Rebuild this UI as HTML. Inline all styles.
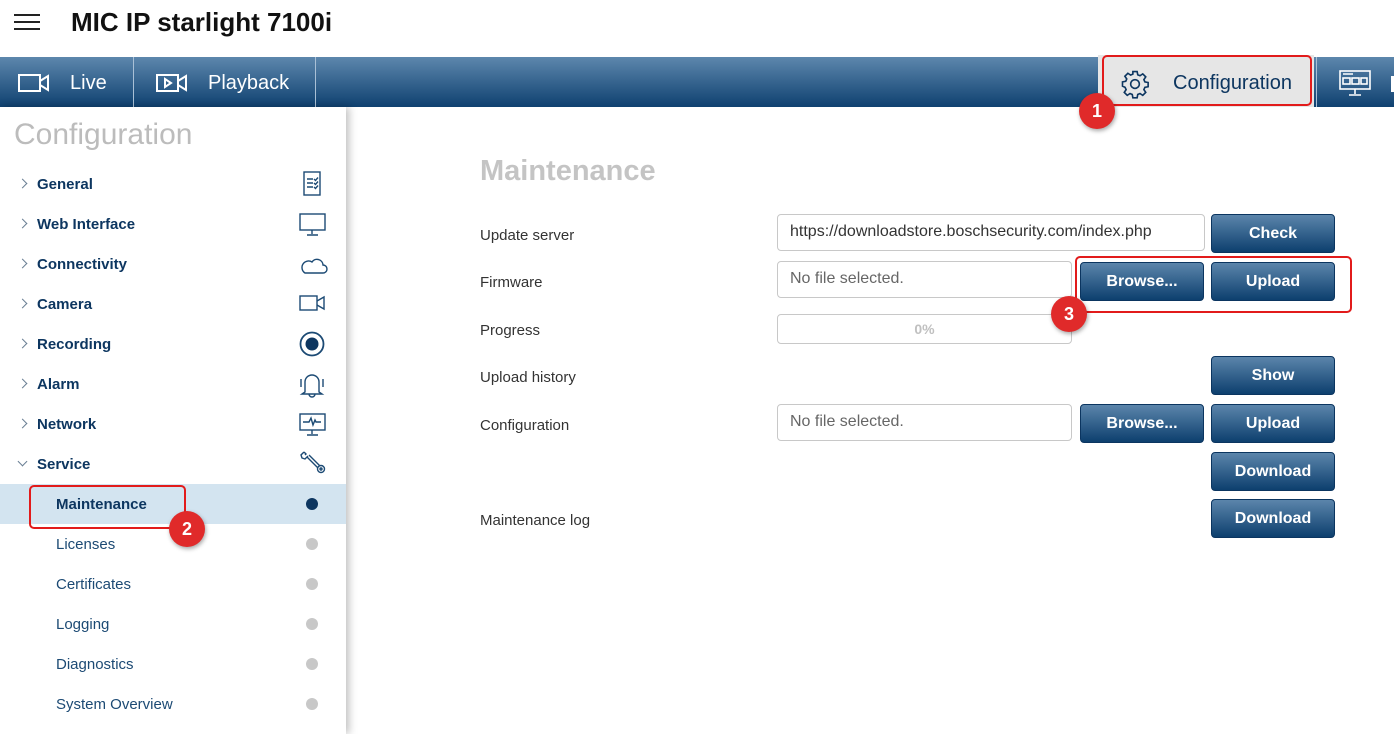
<!DOCTYPE html>
<html><head><meta charset="utf-8"><style>
*{box-sizing:border-box;margin:0;padding:0}
body{width:1394px;height:734px;overflow:hidden;background:#fff;font-family:"Liberation Sans",Arial,sans-serif;position:relative}
.a{position:absolute}
.nav{left:0;top:57px;width:1394px;height:50px;background:linear-gradient(#5d87ad,#0f4170)}
.nt{color:#fff;font-size:20px;top:72px}
.vd{top:57px;width:1px;height:50px;background:#a9c0d6}
.side{left:0;top:107px;width:346px;height:627px;background:#fff;box-shadow:3px 0 8px rgba(0,0,0,.25)}
.mi{left:37px;font-size:15px;font-weight:bold;color:#0d3660}
.ch{left:19px;width:7px;height:7px;border-right:1px solid #6a7f94;border-bottom:1px solid #6a7f94;transform:rotate(-45deg)}
.si{left:56px;font-size:15px;color:#1c4a74}
.dot{left:306px;width:12px;height:12px;border-radius:50%;background:#c8c8c8}
.lb{left:480px;font-size:15px;color:#333}
.in{border:1px solid #c8c8c8;border-radius:4px;font-size:16px;color:#333;padding:8px 12px;background:#fff}
.bt{width:124px;height:39px;border-radius:4px;background:linear-gradient(#5b85ab,#0d3f6e);color:#fff;font-weight:bold;font-size:16px;text-align:center;line-height:38px;border:1px solid #0b3560}
.rb{border:2px solid #e21b1b;border-radius:5px}
.bd{width:36px;height:36px;border-radius:50%;background:#e02a2a;color:#fff;font-weight:bold;font-size:18px;text-align:center;line-height:36px;box-shadow:1px 2px 4px rgba(0,0,0,.35)}
</style></head><body>
<div class="a" style="left:14px;top:14px;width:26px;height:2px;background:#222"></div>
<div class="a" style="left:14px;top:21px;width:26px;height:2px;background:#222"></div>
<div class="a" style="left:14px;top:28px;width:26px;height:2px;background:#222"></div>
<div class="a" style="left:71px;top:7px;font-size:26px;font-weight:bold;color:#111">MIC IP starlight 7100i</div>

<div class="a nav"></div>
<svg class="a" style="left:18px;top:73px" width="32" height="20" viewBox="0 0 32 20" fill="none" stroke="#fff" stroke-width="2"><rect x="1" y="2" width="21" height="16"/><path d="M22 8l8-5v14l-8-5"/></svg>
<div class="a nt" style="left:70px">Live</div>
<div class="a vd" style="left:133px"></div>
<svg class="a" style="left:156px;top:73px" width="32" height="20" viewBox="0 0 32 20" fill="none" stroke="#fff" stroke-width="2"><rect x="1" y="2" width="21" height="16"/><path d="M22 8l8-5v14l-8-5"/><path d="M9 6l6 4-6 4z"/></svg>
<div class="a nt" style="left:208px">Playback</div>
<div class="a vd" style="left:315px"></div>
<div class="a" style="left:1098px;top:55px;width:216px;height:52px;background:#e6e6e6"></div>
<svg class="a" style="left:1120px;top:69px" width="30" height="30" viewBox="0 0 24 24" fill="none" stroke="#0d3660" stroke-width="1.3"><circle cx="12" cy="12" r="3.5"/><path d="M10.3 2h3.4l.5 2.6 1.8.8 2.2-1.5 2.4 2.4-1.5 2.2.8 1.8 2.6.5v3.4l-2.6.5-.8 1.8 1.5 2.2-2.4 2.4-2.2-1.5-1.800.8-.5 2.6h-3.4l-.5-2.6-1.8-.8-2.2 1.5-2.4-2.4 1.5-2.2-.8-1.8L2 13.7v-3.4l2.6-.5.8-1.8-1.5-2.2 2.4-2.4 2.2 1.5 1.8-.8z"/></svg>
<div class="a" style="left:1173px;top:72px;font-size:20px;color:#0d3660">Configuration</div>
<div class="a vd" style="left:1316px"></div>
<svg class="a" style="left:1339px;top:70px" width="32" height="28" viewBox="0 0 32 28" fill="none" stroke="#fff" stroke-width="1.6"><rect x="1" y="1" width="30" height="18"/><rect x="4" y="8" width="7" height="6"/><rect x="13" y="8" width="7" height="6"/><rect x="22" y="8" width="6" height="6"/><path d="M16 19v5M10 25h12M4 4h10"/></svg>
<div class="a" style="left:1391px;top:76px;width:3px;height:16px;background:#fff"></div>
<div class="a rb" style="left:1102px;top:55px;width:210px;height:51px"></div>
<div class="a bd" style="left:1079px;top:93px">1</div>

<div class="a side"></div>
<div class="a" style="left:14px;top:118px;font-size:30px;color:#bcbcbc">Configuration</div>
<div class="a ch" style="top:180px"></div><div class="a mi" style="top:176px">General</div>
<div class="a ch" style="top:220px"></div><div class="a mi" style="top:216px">Web Interface</div>
<div class="a ch" style="top:260px"></div><div class="a mi" style="top:256px">Connectivity</div>
<div class="a ch" style="top:300px"></div><div class="a mi" style="top:296px">Camera</div>
<div class="a ch" style="top:340px"></div><div class="a mi" style="top:336px">Recording</div>
<div class="a ch" style="top:380px"></div><div class="a mi" style="top:376px">Alarm</div>
<div class="a ch" style="top:420px"></div><div class="a mi" style="top:416px">Network</div>
<div class="a ch" style="top:458px;transform:rotate(45deg)"></div><div class="a mi" style="top:456px">Service</div>
<svg class="a" style="left:298px;top:170px" width="30" height="310" viewBox="0 0 30 310" fill="none" stroke="#1c4a74" stroke-width="1.4">
<rect x="6" y="2" width="16" height="23"/><path d="M9 9h6M9 13h6M9 17h6M16 9l1.5 1.5 2.5-3M16 13l1.5 1.5 2.5-3M16 17l1.5 1.5 2.5-3"/>
<rect x="2" y="44" width="25" height="16"/><path d="M14 60v4M9 65h11"/>
<path d="M7 103h18a4 4 0 0 0 0-8 6 6 0 0 0-11-3 5 5 0 0 0-7 11z"/>
<rect x="2" y="126" width="17" height="14"/><path d="M19 131l7-4v12l-7-4"/>
<circle cx="14" cy="174" r="11.5" stroke-width="1.8"/><circle cx="14" cy="174" r="6.5" fill="#0d3660" stroke="none"/>
<path d="M7 222v-10a7 7 0 0 1 14 0v10l3 2H4z M11 224a3 3 0 0 0 6 0 M3 209v8 M25 209v8"/>
<rect x="2" y="244" width="25" height="16"/><path d="M5 252h6l2-4 2 7 2-5 1 2h5M14 260v4M9 265h11"/>
<path d="M6 282l-3 3 1 3 3 1 3-3"/><path d="M6 282l2 2 -1 1"/><path d="M9 287l11 11M11 285l11 11"/><circle cx="23" cy="299" r="3.5"/><circle cx="23" cy="299" r="1"/>
</svg>
<div class="a" style="left:0;top:484px;width:346px;height:40px;background:#d3e4f0"></div>
<div class="a si" style="top:496px;font-weight:bold;color:#0d3660">Maintenance</div><div class="a dot" style="top:498px;background:#0d3660"></div>
<div class="a si" style="top:536px">Licenses</div><div class="a dot" style="top:538px"></div>
<div class="a si" style="top:576px">Certificates</div><div class="a dot" style="top:578px"></div>
<div class="a si" style="top:616px">Logging</div><div class="a dot" style="top:618px"></div>
<div class="a si" style="top:656px">Diagnostics</div><div class="a dot" style="top:658px"></div>
<div class="a si" style="top:696px">System Overview</div><div class="a dot" style="top:698px"></div>
<div class="a rb" style="left:29px;top:485px;width:157px;height:44px"></div>
<div class="a bd" style="left:169px;top:511px">2</div>

<div class="a" style="left:480px;top:155px;font-size:29px;font-weight:bold;color:#c4c4c4">Maintenance</div>
<div class="a lb" style="top:227px">Update server</div>
<div class="a lb" style="top:274px">Firmware</div>
<div class="a lb" style="top:322px">Progress</div>
<div class="a lb" style="top:369px">Upload history</div>
<div class="a lb" style="top:417px">Configuration</div>
<div class="a lb" style="top:512px">Maintenance log</div>

<div class="a in" style="left:777px;top:214px;width:428px;height:37px">https://downloadstore.boschsecurity.com/index.php</div>
<div class="a in" style="left:777px;top:261px;width:295px;height:37px;color:#666">No file selected.</div>
<div class="a in" style="left:777px;top:314px;width:295px;height:30px;font-size:14px;font-weight:bold;color:#c0c0c0;text-align:center;padding:6px">0%</div>
<div class="a in" style="left:777px;top:404px;width:295px;height:37px;color:#666">No file selected.</div>

<div class="a bt" style="left:1211px;top:214px">Check</div>
<div class="a bt" style="left:1080px;top:262px">Browse...</div>
<div class="a bt" style="left:1211px;top:262px">Upload</div>
<div class="a bt" style="left:1211px;top:356px">Show</div>
<div class="a bt" style="left:1080px;top:404px">Browse...</div>
<div class="a bt" style="left:1211px;top:404px">Upload</div>
<div class="a bt" style="left:1211px;top:452px">Download</div>
<div class="a bt" style="left:1211px;top:499px">Download</div>
<div class="a rb" style="left:1075px;top:256px;width:277px;height:57px"></div>
<div class="a bd" style="left:1051px;top:296px">3</div>
</body></html>
